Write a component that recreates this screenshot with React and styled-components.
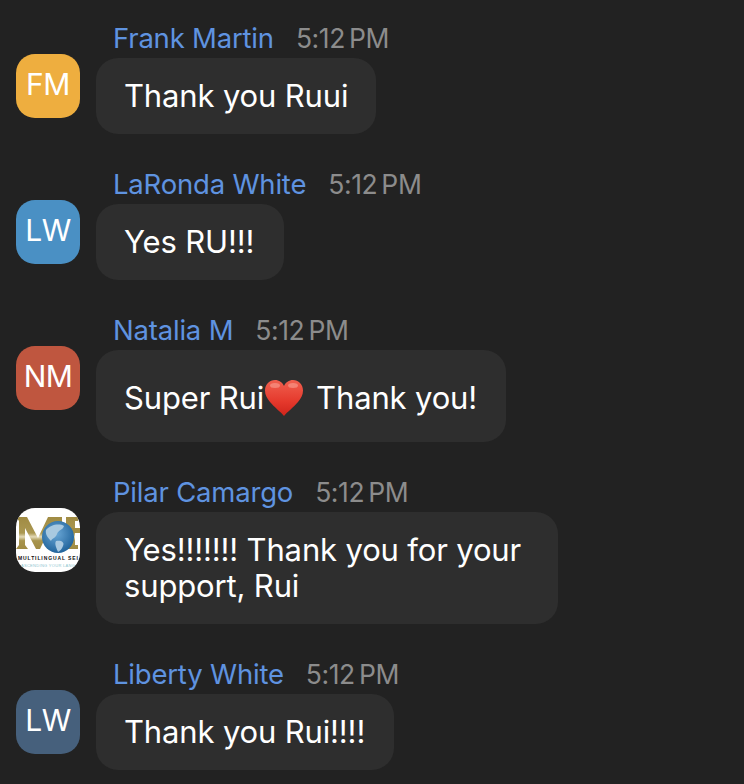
import styled, { createGlobalStyle } from "styled-components"

const GlobalStyle = createGlobalStyle`
    html, body {
        margin: 0;
        background-color: #222222;
    }
    body {
        font-family: "Inter", "Liberation Sans", sans-serif;
    }
`

const ChatCont = styled.div`
    width: 744px;
    height: 784px;
    overflow: hidden;
    box-sizing: border-box;
    padding: 18px 0 0 16px;
    display: flex;
    flex-direction: column;
    gap: 30px;
    background-color: #222222;
`

const Row = styled.div`
    display: flex;
    gap: 16px;
    align-items: flex-start;
`

const Avatar = styled.div`
    flex: none;
    width: 64px;
    height: 64px;
    margin-top: 36px;
    border-radius: 19px;
    overflow: hidden;
    display: flex;
    justify-content: center;
    color: #ffffff;
    font-size: 30px;
    line-height: 60px;
    letter-spacing: -0.5px;
    background-color: ${({ color }) => color};
`

const Body = styled.div`
    display: flex;
    flex-direction: column;
    align-items: flex-start;
`

const Meta = styled.div`
    height: 40px;
    padding-left: 17px;
    display: flex;
    gap: 22px;
    align-items: center;
`

const Name = styled.span`
    color: #5f93e0;
    font-size: 27.5px;
    letter-spacing: -0.2px;
`

const Time = styled.span`
    color: #8c8c8c;
    font-size: 26.5px;
    letter-spacing: -0.4px;
    word-spacing: -3px;
`

const Bubble = styled.div`
    box-sizing: border-box;
    width: ${({ width }) => width}px;
    padding: 20px 20px 20px 28px;
    border-radius: 22px;
    background-color: #2e2e2e;
    color: #ffffff;
    font-size: 31px;
    line-height: 36px;
    letter-spacing: -0.15px;
`

const HeartLine = styled.div`
    box-sizing: border-box;
    display: flex;
    align-items: center;
    height: 52px;
    padding-top: 4px;
    white-space: pre;
`

const HeartIcon = styled.svg`
    flex: none;
    margin: 0 13px 0 1px;
`

function Heart() {
    return (
        <HeartIcon width="38" height="36" viewBox="0 0 38 36">
            <defs>
                <linearGradient id="heartFill" x1="0" y1="0" x2="0" y2="1">
                    <stop offset="0" stopColor="#f0604f" />
                    <stop offset="0.6" stopColor="#e5392c" />
                    <stop offset="1" stopColor="#cf241b" />
                </linearGradient>
            </defs>
            <path
                d="M19 36C16 32 9 27 5 22 2 18 0 15 0 10.500 0 4.500 4.500 0 10 0 14 0 17.500 2.500 19 6 20.500 2.500 24 0 28 0 33.500 0 38 4.500 38 10.500 38 15 36 18 33 22 29 27 22 32 19 36Z"
                fill="url(#heartFill)"
            />
            <ellipse cx="10" cy="5.500" rx="5" ry="2.500" fill="#f9a092" opacity="0.6" />
            <ellipse cx="28" cy="5.500" rx="5" ry="2.500" fill="#f9a092" opacity="0.6" />
        </HeartIcon>
    )
}

function LogoMark() {
    return (
        <svg width="64" height="64" viewBox="0 0 64 64">
            <defs>
                <radialGradient id="globeFill" cx="0.45" cy="0.4" r="0.65">
                    <stop offset="0" stopColor="#6aa7d6" />
                    <stop offset="1" stopColor="#1c5f97" />
                </radialGradient>
                <linearGradient id="goldFill" x1="0" y1="0" x2="0" y2="1">
                    <stop offset="0" stopColor="#a08b43" />
                    <stop offset="0.5" stopColor="#ab9852" />
                    <stop offset="0.62" stopColor="#e3dab8" />
                    <stop offset="0.74" stopColor="#a8954e" />
                    <stop offset="1" stopColor="#a08b43" />
                </linearGradient>
            </defs>
            <rect width="64" height="64" fill="#ffffff" />
            <path d="M0 9H11L22 30 32 9H46V41H34V20L24 41H20L9 20V37L12 41H0L3 37V13Z" fill="url(#goldFill)" />
            <path d="M50 9H62V13H59V37H62V41H50Z" fill="url(#goldFill)" />
            <rect x="52" y="20" width="12" height="5" fill="#a08b43" />
            <circle cx="42" cy="29" r="16" fill="url(#globeFill)" />
            <path d="M30 22C34 17 43 15 48 18 47 22 42 22 41 26 40 30 36 30 35 33 32 30 29 26 30 22Z" fill="#a9c9e0" />
            <path d="M40 33C45 32 49 34 47 38 46 41 44 43 42 44 41 41 38 36 40 33Z" fill="#a9c9e0" />
            <text x="2" y="51.500" fontFamily="Liberation Sans" fontSize="5" fontWeight="700" letterSpacing="0.9" fill="#111111">MULTILINGUAL SEI</text>
            <text x="5" y="59" fontFamily="Liberation Sans" fontSize="4" letterSpacing="0.3" fill="#8fc6cf">ASCENDING YOUR LANG</text>
        </svg>
    )
}

const messages = [
    { initials: "FM", color: "#eeae3f", name: "Frank Martin", width: 280, text: "Thank you Ruui" },
    { initials: "LW", color: "#4a90c4", name: "LaRonda White", width: 188, text: "Yes RU!!!" },
    { initials: "NM", color: "#bf563f", name: "Natalia M", width: 410, heart: true },
    { logo: true, name: "Pilar Camargo", width: 462, text: "Yes!!!!!!! Thank you for your support, Rui" },
    { initials: "LW", color: "#46607c", name: "Liberty White", width: 298, text: "Thank you Rui!!!!" },
]

export default function App() {
    return (
        <>
            <GlobalStyle />
            <ChatCont>
                {messages.map((msg) => (
                    <Row key={msg.name}>
                        <Avatar color={msg.color}>{msg.logo ? <LogoMark /> : msg.initials}</Avatar>
                        <Body>
                            <Meta>
                                <Name>{msg.name}</Name>
                                <Time>5:12 PM</Time>
                            </Meta>
                            <Bubble width={msg.width}>
                                {msg.heart ? (
                                    <HeartLine>Super Rui<Heart />Thank you!</HeartLine>
                                ) : msg.text}
                            </Bubble>
                        </Body>
                    </Row>
                ))}
            </ChatCont>
        </>
    )
}
